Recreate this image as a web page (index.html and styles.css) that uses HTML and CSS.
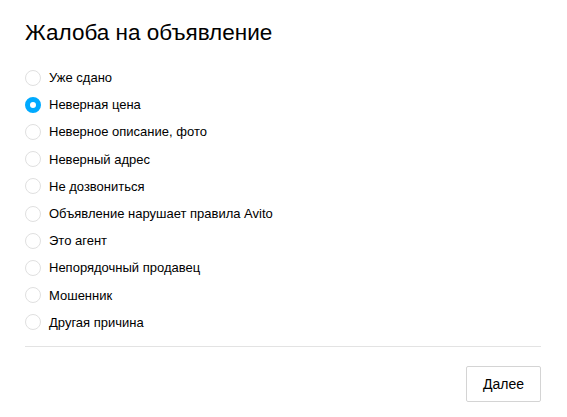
FILE: index.html
```html
<!DOCTYPE html>
<html lang="ru">
<head>
    <meta charset="UTF-8">
    <meta name="viewport" content="width=device-width, initial-scale=1.0">
    <title>Жалоба на объявление</title>
    <link rel="stylesheet" href="styles.css">
</head>
<body>
    <div class="modal">
        <h1 class="title">Жалоба на объявление</h1>
        <form class="reasons">
            <label class="reason"><input type="radio" name="reason"><span class="dot"></span>Уже сдано</label>
            <label class="reason"><input type="radio" name="reason" checked><span class="dot"></span>Неверная цена</label>
            <label class="reason"><input type="radio" name="reason"><span class="dot"></span>Неверное описание, фото</label>
            <label class="reason"><input type="radio" name="reason"><span class="dot"></span>Неверный адрес</label>
            <label class="reason"><input type="radio" name="reason"><span class="dot"></span>Не дозвониться</label>
            <label class="reason"><input type="radio" name="reason"><span class="dot"></span>Объявление нарушает правила Avito</label>
            <label class="reason"><input type="radio" name="reason"><span class="dot"></span>Это агент</label>
            <label class="reason"><input type="radio" name="reason"><span class="dot"></span>Непорядочный продавец</label>
            <label class="reason"><input type="radio" name="reason"><span class="dot"></span>Мошенник</label>
            <label class="reason"><input type="radio" name="reason"><span class="dot"></span>Другая причина</label>
        </form>
        <div class="footer">
            <button type="button" class="next">Далее</button>
        </div>
    </div>
</body>
</html>
```

FILE: styles.css
```css
body {
    margin: 0;
    padding: 0;
    background: #fff;
    font-family: "Liberation Sans", Arial, sans-serif;
    color: #000;
}
.modal {
    padding: 18px 26px 0 25px;
}
.title {
    margin: 0 0 16px;
    font-size: 22.5px;
    font-weight: normal;
    line-height: 30px;
}
.reasons {
    display: flex;
    flex-direction: column;
    padding-bottom: 10px;
    border-bottom: 1px solid #e3e3e3;
}
.reason {
    display: flex;
    align-items: center;
    height: 27.2px;
    font-size: 13px;
    cursor: pointer;
}
.reason input {
    display: none;
}
.dot {
    box-sizing: border-box;
    width: 16px;
    height: 16px;
    margin-right: 8px;
    border: 1px solid #e0e0e0;
    border-radius: 50%;
    background: #fff;
}
.reason input:checked + .dot {
    border: 5px solid #00aaff;
    background: #fff;
}
.footer {
    display: flex;
    justify-content: flex-end;
    padding-top: 19px;
}
.next {
    width: 75px;
    height: 36px;
    padding: 0;
    background: #fff;
    border: 1px solid #d4d4d4;
    border-radius: 2px;
    font-family: "Liberation Sans", Arial, sans-serif;
    font-size: 14px;
    color: #000;
    cursor: pointer;
}
```
